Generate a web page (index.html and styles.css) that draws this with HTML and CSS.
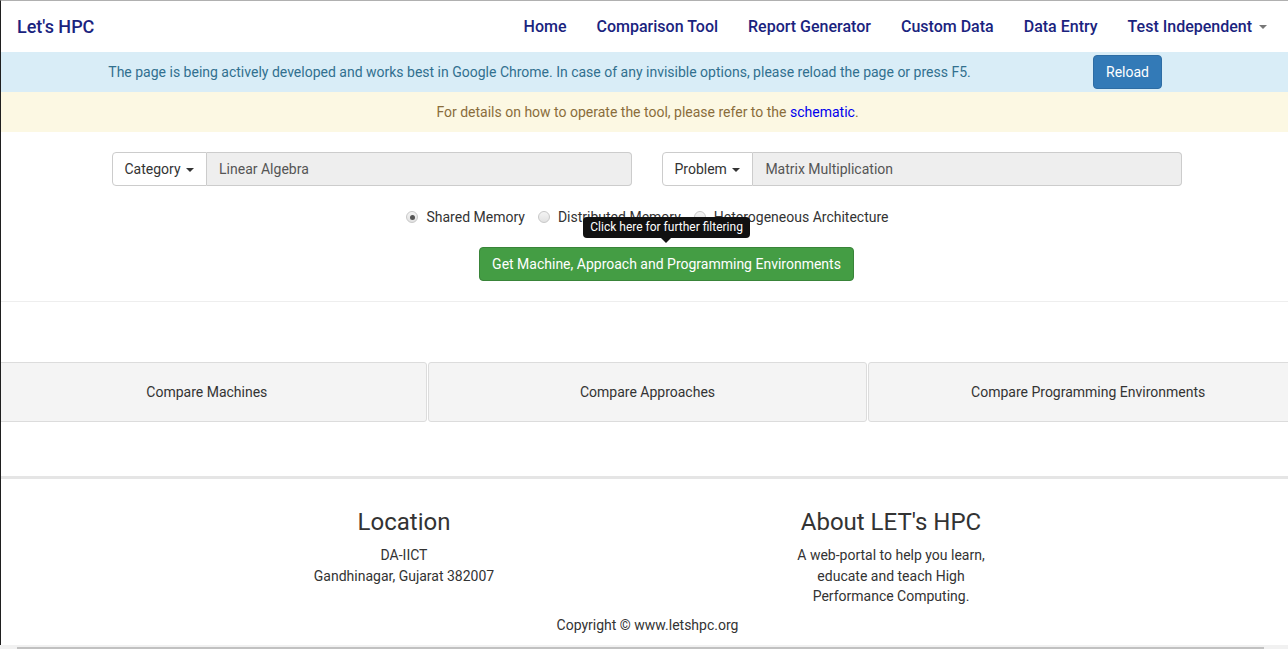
FILE: index.html
```html
<!DOCTYPE html>
<html>
<head>
<meta charset="utf-8">
<title>Let's HPC</title>
<link rel="stylesheet" href="styles.css">
</head>
<body>
<nav class="navbar">
  <a class="brand">Let's HPC</a>
  <ul class="nav">
    <li><a>Home</a></li>
    <li><a>Comparison Tool</a></li>
    <li><a>Report Generator</a></li>
    <li><a>Custom Data</a></li>
    <li><a>Data Entry</a></li>
    <li class="last"><a>Test Independent <span class="caret caret-grey"></span></a></li>
  </ul>
</nav>
<div class="alert-info">
  <div class="info-text">The page is being actively developed and works best in Google Chrome. In case of any invisible options, please reload the page or press F5.</div>
  <button class="btn-reload">Reload</button>
</div>
<div class="alert-warning">
  <span>For details on how to operate the tool, please refer to the <a class="link">schematic</a>.</span>
</div>

<main class="main">
  <div class="groups">
    <div class="input-group">
      <button class="addon-btn">Category <span class="caret"></span></button>
      <div class="input">Linear Algebra</div>
    </div>
    <div class="input-group">
      <button class="addon-btn">Problem <span class="caret"></span></button>
      <div class="input">Matrix Multiplication</div>
    </div>
  </div>
  <div class="radios">
    <label class="radio"><span class="circle checked"></span>Shared Memory</label>
    <label class="radio"><span class="circle"></span>Distributed Memory</label>
    <label class="radio"><span class="circle"></span>Heterogeneous Architecture</label>
  </div>
  <div class="go-row">
    <div class="go-wrap">
      <div class="tooltip">Click here for further filtering<span class="tip-arrow"></span></div>
      <button class="btn-success">Get Machine, Approach and Programming Environments</button>
    </div>
  </div>
</main>
<div class="hr"></div>
<div class="compare-row">
  <div class="compare">Compare Machines</div>
  <div class="compare">Compare Approaches</div>
  <div class="compare">Compare Programming Environments</div>
</div>
<div class="footer-line"></div>
<footer class="footer">
  <div class="cols">
    <div class="col">
      <h3>Location</h3>
      <p>DA-IICT<br>Gandhinagar, Gujarat 382007</p>
    </div>
    <div class="col">
      <h3>About LET's HPC</h3>
      <p class="about">A web-portal to help you learn, educate and teach High Performance Computing.</p>
    </div>
  </div>
  <p class="copy">Copyright © www.letshpc.org</p>
</footer>
<div class="hscroll"><div class="thumb"></div></div>
</body>
</html>
```

FILE: styles.css
```css
* { box-sizing: border-box; }
html, body { margin: 0; padding: 0; }
body {
  font-family: Roboto, "Noto Sans", "Liberation Sans", sans-serif;
  font-size: 14px;
  line-height: 20px;
  color: #333;
  background: #fff;
  border-left: 1px solid #1f1f1f;
  border-top: 1px solid #b0b0b0;
  overflow: hidden;
  height: 649px;
}

/* navbar */
.navbar {
  height: 51px;
  display: flex;
  align-items: center;
  padding: 0 6px 0 16px;
}
.brand {
  font-size: 18px;
  font-weight: 500;
  color: #1a237e;
}
.nav {
  list-style: none;
  margin: 0 0 0 auto;
  padding: 0;
  display: flex;
}
.nav li a {
  display: block;
  padding: 0 15px;
  font-size: 16px;
  font-weight: 500;
  color: #1a237e;
}
.caret {
  display: inline-block;
  width: 0;
  height: 0;
  margin-left: 2px;
  vertical-align: middle;
  border-top: 4px solid #333;
  border-left: 4px solid transparent;
  border-right: 4px solid transparent;
}
.caret-grey { border-top-color: #777; margin-left: 3px; }

/* alerts */
.alert-info {
  height: 40px;
  background: #d9edf7;
  display: flex;
  align-items: center;
}
.info-text {
  width: 1077px;
  text-align: center;
  color: #31708f;
}
.btn-reload {
  margin-left: 15px;
  height: 34px;
  width: 69px;
  padding: 0;
  font: inherit;
  color: #fff;
  background: #337ab7;
  border: 1px solid #2e6da4;
  border-radius: 4px;
}
.alert-warning {
  height: 40px;
  background: #fcf8e3;
  color: #8a6d3b;
  display: flex;
  align-items: center;
  justify-content: center;
  padding-left: 6px;
}
.link { color: #0000ee; }

/* main */
.main { padding-left: 6px; }
.groups {
  display: flex;
  justify-content: center;
  gap: 30px;
  padding-top: 20px;
  padding-right: 2px;
}
.input-group {
  width: 520px;
  height: 34px;
  display: flex;
}
.addon-btn {
  height: 34px;
  padding: 0 12px;
  font: inherit;
  color: #333;
  background: #fff;
  border: 1px solid #ccc;
  border-radius: 4px 0 0 4px;
  white-space: nowrap;
}
.input {
  flex: 1;
  height: 34px;
  padding: 6px 12px;
  background: #eee;
  border: 1px solid #ccc;
  border-left: 0;
  border-radius: 0 4px 4px 0;
  color: #555;
}
.radios {
  display: flex;
  justify-content: center;
  gap: 13px;
  margin-top: 21px;
}
.radio {
  display: flex;
  align-items: center;
}
.circle {
  width: 12px;
  height: 12px;
  border-radius: 50%;
  border: 1px solid #c8c8c8;
  background: linear-gradient(#f4f4f4, #e2e2e2);
  margin-right: 8px;
  position: relative;
}
.circle.checked::after {
  content: "";
  position: absolute;
  left: 2.5px;
  top: 2.5px;
  width: 5px;
  height: 5px;
  border-radius: 50%;
  background: #555;
}
.go-row {
  display: flex;
  justify-content: center;
  margin-top: 20px;
  padding-left: 38px;
}
.go-wrap { position: relative; }
.btn-success {
  display: block;
  height: 34px;
  padding: 0 12px;
  font: inherit;
  color: #fff;
  background: #449d44;
  border: 1px solid #398439;
  border-radius: 4px;
}
.tooltip {
  position: absolute;
  left: 104px;
  top: -30px;
  width: 167px;
  height: 21px;
  background: #111;
  color: #fff;
  font-size: 12px;
  line-height: 21px;
  text-align: center;
  border-radius: 4px;
}
.tip-arrow {
  position: absolute;
  left: 78px;
  bottom: -5px;
  width: 0;
  height: 0;
  border-top: 5px solid #111;
  border-left: 5px solid transparent;
  border-right: 5px solid transparent;
}
.hr {
  margin-top: 20px;
  height: 1px;
  background: #eee;
}

/* compare */
.compare-row {
  display: flex;
  margin-top: 60px;
  margin-left: -14px;
  width: 1322px;
}
.compare {
  width: 440px;
  height: 60px;
  margin-right: 1px;
  background: #f4f4f4;
  border: 1px solid #dcdcdc;
  border-radius: 3px;
  display: flex;
  align-items: center;
  justify-content: center;
  color: #333;
}
.footer-line {
  margin-top: 54px;
  height: 3px;
  background: #e5e5e5;
}

/* footer */
.footer { padding-left: 6px; }
.cols {
  display: flex;
  justify-content: center;
}
.col {
  width: 487px;
  text-align: center;
}
.col h3 {
  margin: 30px 0 10px;
  font-size: 24px;
  font-weight: 400;
  line-height: 26px;
  color: #333;
}
.col p { margin: 0; line-height: 20.5px; }
.about {
  width: 210px;
  margin: 0 auto !important;
}
.copy {
  margin: 8px 0 0;
  text-align: center;
}

/* horizontal scrollbar */
.hscroll {
  position: fixed;
  left: 0;
  right: 0;
  bottom: 0;
  height: 4px;
  background: #f1f1f1;
}
.thumb {
  margin: 2px 0 0 17px;
  width: 1247px;
  height: 2px;
  background: #c1c1c1;
}
```
